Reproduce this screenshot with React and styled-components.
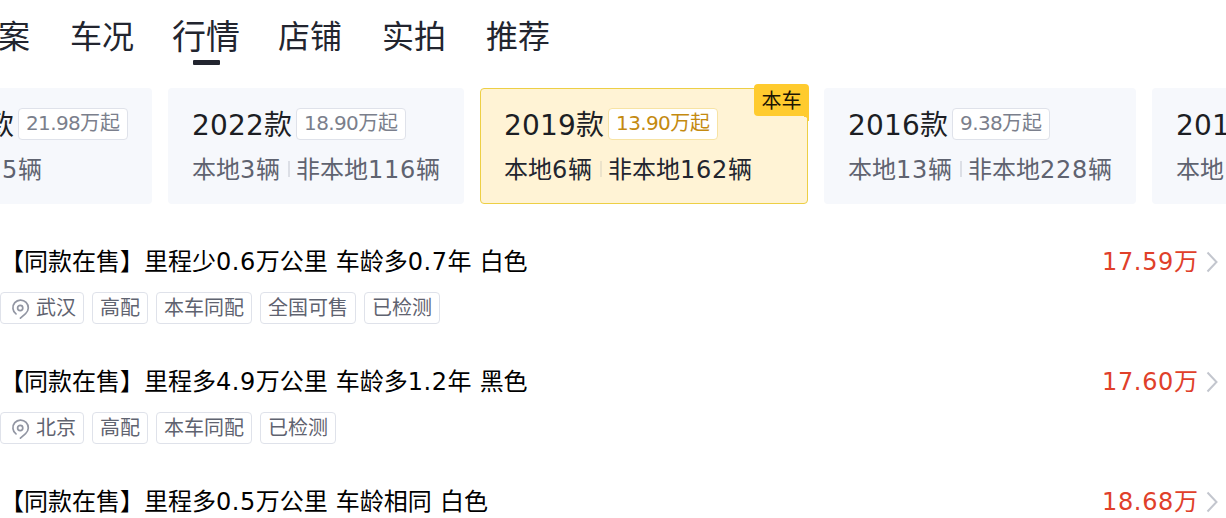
import React from "react";
import styled, { createGlobalStyle, css } from "styled-components";

const GlobalStyle = createGlobalStyle`
  * {
    box-sizing: border-box;
  }

  body {
    margin: 0;
    background: #fff;
    color: #000;
    font-family: "DejaVu Sans", "Noto Sans CJK SC", sans-serif;
    overflow: hidden;
  }
`;

const Page = styled.main`
  width: 1226px;
  height: 518px;
  overflow: hidden;
`;

const Tabs = styled.nav`
  display: flex;
  gap: 40px;
  height: 88px;
  margin-left: -34px;
`;

const Tab = styled.div`
  display: flex;
  flex-direction: column;
  align-items: center;
  flex: none;
  width: 64px;
  padding-top: 15px;
  font-size: ${props => (props.$active ? 34 : 32)}px;
  line-height: 45px;
  white-space: nowrap;
  color: #22252f;
`;

const TabLine = styled.span`
  width: 27px;
  height: 5px;
  border-radius: 1px;
  background: #22252f;
`;

const Years = styled.section`
  display: flex;
  gap: 16px;
  margin-left: -110px;
`;

const YearCard = styled.div`
  position: relative;
  flex: none;
  height: 116px;
  padding: 20px 24px 0;
  border-radius: 4px;
  background: #f6f8fc;
  color: #5f6370;

  ${props =>
    props.$active &&
    css`
      padding: 19px 55px 0 23px;
      border: 1px solid #edcf45;
      background: #fff3d5;
      color: #22252f;
    `}
`;

const YearHead = styled.div`
  display: flex;
  align-items: center;
  gap: 4px;
  height: 32px;
`;

const YearName = styled.span`
  padding-top: 3px;
  font-size: 28px;
  line-height: 32px;
  white-space: nowrap;
  color: #1c1e24;
`;

const StartPrice = styled.span`
  height: 32px;
  padding: 0 7px;
  border: 1px solid ${props => (props.$active ? "#f7e3a4" : "#dfe2ea")};
  border-radius: 4px;
  background: #fff;
  font-size: 20px;
  line-height: 29px;
  white-space: nowrap;
  color: ${props => (props.$active ? "#c48a10" : "#7b7f8c")};
`;

const Counts = styled.div`
  display: flex;
  align-items: center;
  margin-top: 12px;
  font-size: 24px;
  line-height: 36px;
  white-space: nowrap;
`;

const Divider = styled.i`
  width: 2px;
  height: 16px;
  margin: 0 6px 2px 8px;
  background: ${props => (props.$active ? "#ece3cb" : "#dcdfe6")};
`;

/* sits on the top right corner of the active card */
const Corner = styled.span`
  position: absolute;
  top: -5px;
  right: -2px;
  width: 55px;
  height: 32px;
  border-radius: 4px 4px 0 4px;
  background: #ffcb2e;
  font-size: 20px;
  line-height: 35px;
  text-align: center;
  color: #1c1604;

  &::after {
    content: "";
    position: absolute;
    top: 32px;
    right: 0;
    width: 5px;
    height: 5px;
    background: radial-gradient(circle at 0 100%, transparent 4px, #ffcb2e 4.5px);
  }
`;

const CarList = styled.section`
  padding-top: 40px;
`;

const Car = styled.article`
  height: 120px;
`;

const CarHead = styled.div`
  display: flex;
  align-items: center;
  height: 36px;
  padding-right: 8px;
  font-size: 24px;
  line-height: 36px;
  white-space: nowrap;
`;

const Title = styled.span`
  flex: 1;
`;

const Price = styled.span`
  margin-right: 8px;
  color: #e0402a;
`;

const Tags = styled.div`
  display: flex;
  gap: 8px;
  margin-top: 12px;
`;

const Tag = styled.span`
  display: flex;
  align-items: center;
  height: 32px;
  padding: 0 7px;
  border: 1px solid #dfe2ea;
  border-radius: 4px;
  font-size: 20px;
  line-height: 30px;
  color: #5f6370;

  svg {
    margin: 2px 4px 0 0;
  }
`;

const Spaced = styled.span`
  letter-spacing: ${props => props.$gap}px;
`;

// digits, dots and spaces get their own tracking, hanzi stay on the grid
const Text = ({ gap, children }) =>
  children
    .split(/([\d. ]+)/)
    .map((part, i) =>
      i % 2 ? (
        <Spaced key={i} $gap={gap}>
          {part}
        </Spaced>
      ) : (
        part
      )
    );

const PinIcon = () => (
  <svg width="24" height="24" viewBox="0 0 24 24" fill="none" stroke="#9296a3">
    <path
      d="M8 16.9 A7.7 7.7 0 1 1 17.6 16.6 L12.4 21.2"
      strokeWidth="1.7"
      strokeLinecap="round"
      strokeLinejoin="round"
    />
    <circle cx="12.2" cy="11" r="2.6" strokeWidth="1.7" />
  </svg>
);

const Chevron = () => (
  <svg width="12" height="22" viewBox="0 0 12 22" fill="none" stroke="#c3c6ce">
    <path d="M1.5 1.5 L10.5 11 L1.5 20.5" strokeWidth="2" />
  </svg>
);

const tabs = ["方案", "车况", "行情", "店铺", "实拍", "推荐"];

const years = [
  { name: "2023款", price: "21.98万起", counts: ["非本地15辆"] },
  { name: "2022款", price: "18.90万起", counts: ["本地3辆", "非本地116辆"] },
  {
    name: "2019款",
    price: "13.90万起",
    counts: ["本地6辆", "非本地162辆"],
    active: true
  },
  { name: "2016款", price: "9.38万起", counts: ["本地13辆", "非本地228辆"] },
  { name: "2015款", price: "8.58万起", counts: ["本地1辆", "非本地105辆"] }
];

const cars = [
  {
    title: "【同款在售】里程少0.6万公里 车龄多0.7年 白色",
    price: "17.59万",
    city: "武汉",
    tags: ["高配", "本车同配", "全国可售", "已检测"]
  },
  {
    title: "【同款在售】里程多4.9万公里 车龄多1.2年 黑色",
    price: "17.60万",
    city: "北京",
    tags: ["高配", "本车同配", "已检测"]
  },
  {
    title: "【同款在售】里程多0.5万公里 车龄相同 白色",
    price: "18.68万",
    city: "上海",
    tags: ["高配", "已检测"]
  }
];

const Year = ({ year }) => (
  <YearCard $active={year.active}>
    <YearHead>
      <YearName>
        <Text gap={0.19}>{year.name}</Text>
      </YearName>
      <StartPrice $active={year.active}>
        <Text gap={-0.65}>{year.price}</Text>
      </StartPrice>
    </YearHead>
    <Counts>
      {year.counts.map((count, i) => (
        <React.Fragment key={count}>
          {i > 0 && <Divider $active={year.active} />}
          <span>
            <Text gap={0.73}>{count}</Text>
          </span>
        </React.Fragment>
      ))}
    </Counts>
    {year.active && <Corner>本车</Corner>}
  </YearCard>
);

const App = () => (
  <Page>
    <GlobalStyle />
    <Tabs>
      {tabs.map(tab => (
        <Tab key={tab} $active={tab === "行情"}>
          {tab}
          {tab === "行情" && <TabLine />}
        </Tab>
      ))}
    </Tabs>
    <Years>
      {years.map(year => (
        <Year key={year.name} year={year} />
      ))}
    </Years>
    <CarList>
      {cars.map(car => (
        <Car key={car.title}>
          <CarHead>
            <Title>
              <Text gap={0.5}>{car.title}</Text>
            </Title>
            <Price>
              <Text gap={0.66}>{car.price}</Text>
            </Price>
            <Chevron />
          </CarHead>
          <Tags>
            <Tag>
              <PinIcon />
              {car.city}
            </Tag>
            {car.tags.map(tag => (
              <Tag key={tag}>{tag}</Tag>
            ))}
          </Tags>
        </Car>
      ))}
    </CarList>
  </Page>
);

export default App;
